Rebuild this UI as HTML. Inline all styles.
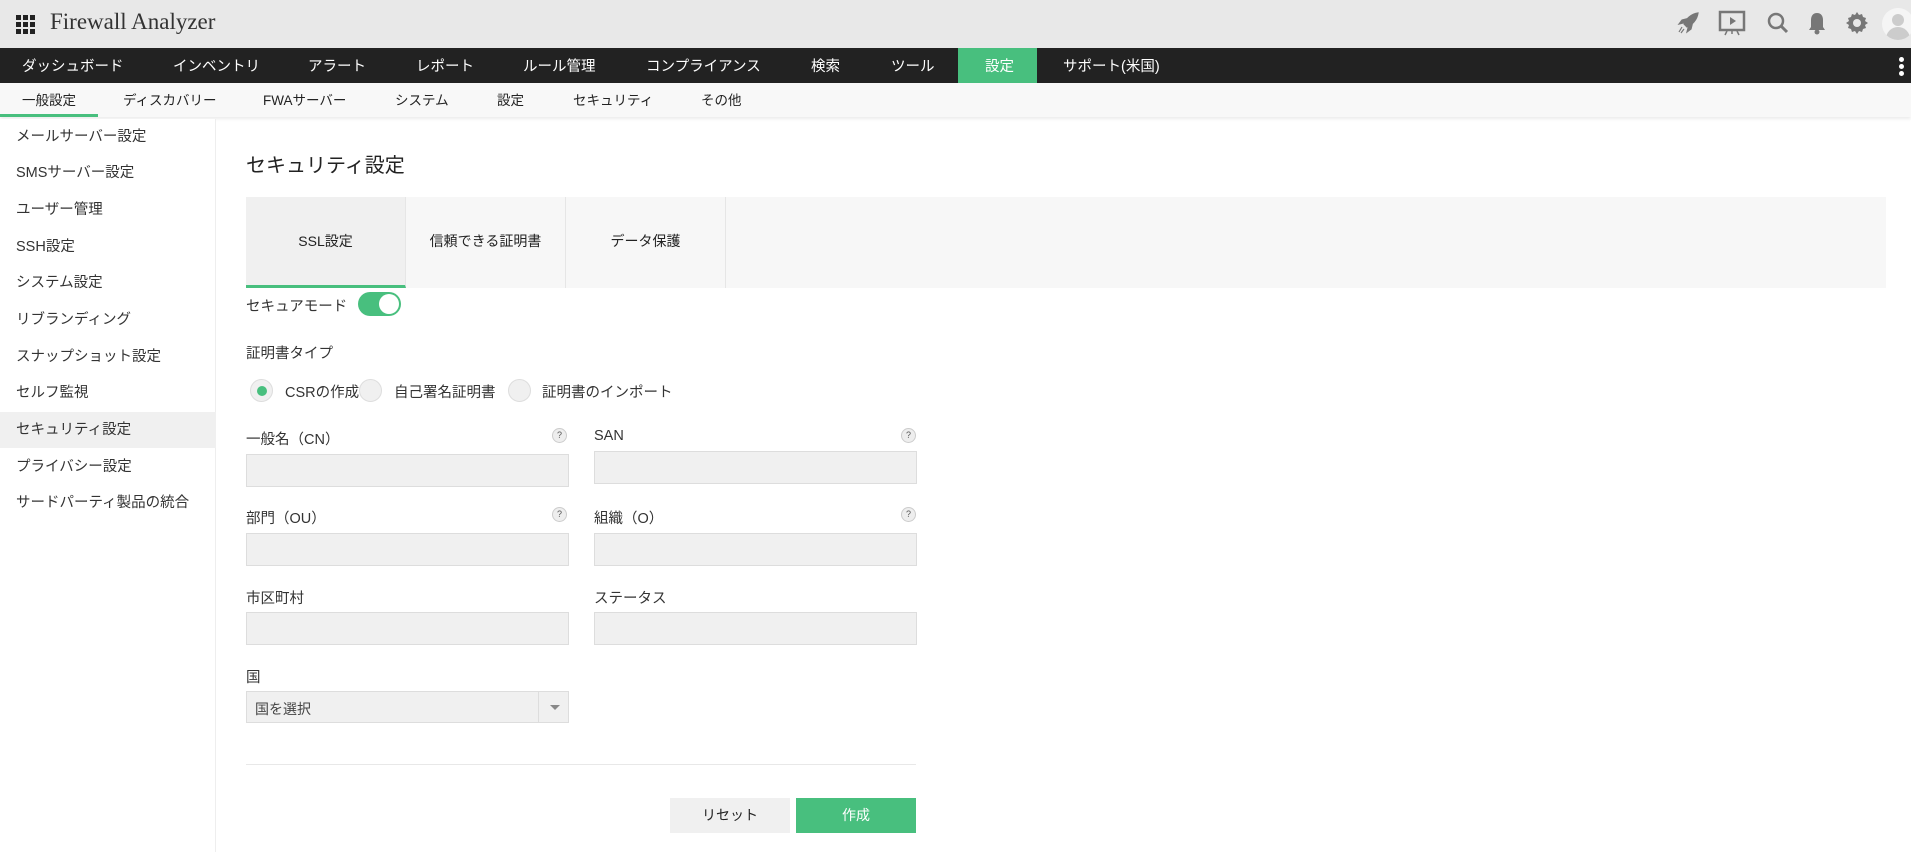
<!DOCTYPE html>
<html><head><meta charset="utf-8"><style>
*{box-sizing:border-box;margin:0;padding:0}
body{width:1911px;height:852px;overflow:hidden;background:#fff;font-family:"Liberation Sans","Noto Sans CJK JP",sans-serif;color:#222;position:relative}
.a{position:absolute;white-space:nowrap}
#top{position:absolute;left:0;top:0;width:1911px;height:48px;background:#e8e8e8}
#nav{position:absolute;left:0;top:48px;width:1911px;height:35px;background:#222}
#nav .a{color:#fff;font-size:14.5px;top:7px}
#sub{position:absolute;left:0;top:83px;width:1911px;height:34px;background:#f8f8f8;box-shadow:0 2px 3px rgba(0,0,0,.08)}
#sub .a{font-size:13.5px;top:6px;color:#222}
#side{position:absolute;left:0;top:119px;width:216px;height:733px;background:#fff;border-right:1px solid #eee}
.si{position:absolute;left:0;width:216px;height:36px;line-height:36px;padding-left:16px;font-size:14.5px;color:#333}
.lbl{position:absolute;font-size:14.5px;color:#333}
.inp{position:absolute;width:323px;height:33px;background:#f0f0f0;border:1px solid #ddd}
.q{position:absolute;width:15px;height:15px;border-radius:50%;background:#eee;border:1px solid #ccc;font-size:9px;text-align:center;line-height:13px;color:#555}
.rad{position:absolute;width:23px;height:23px;border-radius:50%;background:#f0f0f0;border:1px solid #ddd;top:379px}
</style></head><body>
<div id="top">
<svg class="a" style="left:16px;top:15px" width="19" height="19"><g fill="#222"><rect x="0" y="0" width="5" height="5"/><rect x="7" y="0" width="5" height="5"/><rect x="14" y="0" width="5" height="5"/><rect x="0" y="7" width="5" height="5"/><rect x="7" y="7" width="5" height="5"/><rect x="14" y="7" width="5" height="5"/><rect x="0" y="14" width="5" height="5"/><rect x="7" y="14" width="5" height="5"/><rect x="14" y="14" width="5" height="5"/></g></svg>
<div class="a" style="left:50px;top:9px;font-family:'Liberation Serif',serif;font-size:23px;color:#333">Firewall Analyzer</div>
<svg class="a" style="left:1676px;top:11px" width="24" height="24" viewBox="0 0 24 24"><path d="M22 2C15 3 10 8 8 13l3 3c5-2 10-7 11-14zM7 12l-4 1 3-4 4-1zM12 17l-1 4 4-3 1-4zM6 16l-3 5M8 18l-3 4" fill="#777" stroke="#777" stroke-width="1.2"/></svg>
<svg class="a" style="left:1718px;top:10px" width="28" height="26"><rect x="2" y="2" width="24" height="18" fill="none" stroke="#777" stroke-width="2.5"/><path d="M12 7l6 4-6 4z" fill="#777"/><path d="M9 21l-2 4M19 21l2 4M14 21v3" stroke="#777" stroke-width="1.5"/></svg>
<svg class="a" style="left:1766px;top:11px" width="24" height="24"><circle cx="10" cy="10" r="7" fill="none" stroke="#777" stroke-width="2.5"/><path d="M15 15l6 6" stroke="#777" stroke-width="3"/></svg>
<svg class="a" style="left:1807px;top:11px" width="20" height="24"><path d="M10 2c-4 0-6 3-6 7v7l-2 3h16l-2-3V9c0-4-2-7-6-7z" fill="#777"/><circle cx="10" cy="21" r="2.5" fill="#777"/></svg>
<svg class="a" style="left:1845px;top:11px" width="24" height="24" viewBox="0 0 24 24"><path d="M12 1l2 3 3-1 1 3 3 1-1 3 3 2-3 2 1 3-3 1-1 3-3-1-2 3-2-3-3 1-1-3-3-1 1-3-3-2 3-2-1-3 3-1 1-3 3 1z" fill="#777"/><circle cx="12" cy="12" r="4" fill="#e8e8e8"/></svg>
<div class="a" style="left:1882px;top:8px;width:32px;height:32px;border-radius:50%;background:#f5f5f5;overflow:hidden"><div class="a" style="left:10px;top:6px;width:12px;height:12px;border-radius:50%;background:#ccc"></div><div class="a" style="left:4px;top:19px;width:24px;height:16px;border-radius:12px 12px 0 0;background:#ccc"></div></div>
</div>
<div id="nav">
<div class="a" style="left:958px;top:0;width:79px;height:35px;background:#48bf7e"></div>
<div class="a" style="left:22px">ダッシュボード</div><div class="a" style="left:173px">インベントリ</div><div class="a" style="left:308px">アラート</div><div class="a" style="left:416px">レポート</div><div class="a" style="left:523px">ルール管理</div><div class="a" style="left:646px">コンプライアンス</div><div class="a" style="left:811px">検索</div><div class="a" style="left:891px">ツール</div><div class="a" style="left:985px">設定</div><div class="a" style="left:1063px">サポート(米国)</div>
<div class="a" style="left:1899px;top:9px;width:5px;height:5px;border-radius:50%;background:#fff"></div><div class="a" style="left:1899px;top:16px;width:5px;height:5px;border-radius:50%;background:#fff"></div><div class="a" style="left:1899px;top:23px;width:5px;height:5px;border-radius:50%;background:#fff"></div>
</div>
<div id="sub">
<div class="a" style="left:0;top:31px;width:98px;height:3px;background:#48bf7e"></div>
<div class="a" style="left:22px">一般設定</div><div class="a" style="left:123px">ディスカバリー</div><div class="a" style="left:263px">FWAサーバー</div><div class="a" style="left:395px">システム</div><div class="a" style="left:497px">設定</div><div class="a" style="left:573px">セキュリティ</div><div class="a" style="left:701px">その他</div>
</div>
<div id="side">
<div class="si" style="top:0">メールサーバー設定</div>
<div class="si" style="top:36px">SMSサーバー設定</div>
<div class="si" style="top:73px">ユーザー管理</div>
<div class="si" style="top:110px">SSH設定</div>
<div class="si" style="top:146px">システム設定</div>
<div class="si" style="top:183px">リブランディング</div>
<div class="si" style="top:220px">スナップショット設定</div>
<div class="si" style="top:256px">セルフ監視</div>
<div class="si" style="top:293px;background:#f0f0f0">セキュリティ設定</div>
<div class="si" style="top:330px">プライバシー設定</div>
<div class="si" style="top:366px">サードパーティ製品の統合</div>
</div>
<div class="a" style="left:246px;top:149px;font-size:20px;color:#222">セキュリティ設定</div>
<div class="a" style="left:246px;top:197px;width:1640px;height:91px;background:#f7f7f7"></div>
<div class="a" style="left:246px;top:197px;width:160px;height:91px;background:#f0f0f0;border-bottom:3px solid #48bf7e;border-right:1px solid #e6e6e6;text-align:center;line-height:88px;font-size:14px">SSL設定</div>
<div class="a" style="left:406px;top:197px;width:160px;height:91px;border-right:1px solid #e6e6e6;text-align:center;line-height:88px;font-size:14px">信頼できる証明書</div>
<div class="a" style="left:566px;top:197px;width:160px;height:91px;border-right:1px solid #e6e6e6;text-align:center;line-height:88px;font-size:14px">データ保護</div>
<div class="lbl" style="left:246px;top:295px">セキュアモード</div>
<div class="a" style="left:358px;top:292px;width:43px;height:24px;border-radius:12px;background:#48bf7e"><div class="a" style="left:21px;top:2px;width:20px;height:20px;border-radius:50%;background:#fff"></div></div>
<div class="lbl" style="left:246px;top:342px">証明書タイプ</div>
<div class="rad" style="left:250px"><div class="a" style="left:6px;top:6px;width:10px;height:10px;border-radius:50%;background:#48bf7e"></div></div>
<div class="lbl" style="left:285px;top:381px">CSRの作成</div>
<div class="rad" style="left:359px"></div>
<div class="lbl" style="left:394px;top:381px">自己署名証明書</div>
<div class="rad" style="left:508px"></div>
<div class="lbl" style="left:542px;top:381px">証明書のインポート</div>
<div class="lbl" style="left:246px;top:428px">一般名（CN）</div><div class="q" style="left:552px;top:428px">?</div>
<div class="lbl" style="left:594px;top:428px">SAN</div><div class="q" style="left:901px;top:428px">?</div>
<div class="inp" style="left:246px;top:454px"></div><div class="inp" style="left:594px;top:451px"></div>
<div class="lbl" style="left:246px;top:507px">部門（OU）</div><div class="q" style="left:552px;top:507px">?</div>
<div class="lbl" style="left:594px;top:507px">組織（O）</div><div class="q" style="left:901px;top:507px">?</div>
<div class="inp" style="left:246px;top:533px"></div><div class="inp" style="left:594px;top:533px"></div>
<div class="lbl" style="left:246px;top:587px">市区町村</div>
<div class="lbl" style="left:594px;top:587px">ステータス</div>
<div class="inp" style="left:246px;top:612px"></div><div class="inp" style="left:594px;top:612px"></div>
<div class="lbl" style="left:246px;top:666px">国</div>
<div class="inp" style="left:246px;top:691px;height:32px"><div class="a" style="left:0;top:7px;padding-left:8px;font-size:14px;color:#444">国を選択</div><div class="a" style="left:291px;top:0;width:1px;height:30px;background:#ddd"></div><div class="a" style="left:303px;top:13px;width:0;height:0;border-left:5px solid transparent;border-right:5px solid transparent;border-top:5px solid #888"></div></div>
<div class="a" style="left:246px;top:764px;width:670px;height:1px;background:#e8e8e8"></div>
<div class="a" style="left:670px;top:798px;width:120px;height:35px;background:#f0f0f0;text-align:center;line-height:35px;font-size:14px">リセット</div>
<div class="a" style="left:796px;top:798px;width:120px;height:35px;background:#48bf7e;color:#fff;text-align:center;line-height:35px;font-size:14px">作成</div>
</body></html>
